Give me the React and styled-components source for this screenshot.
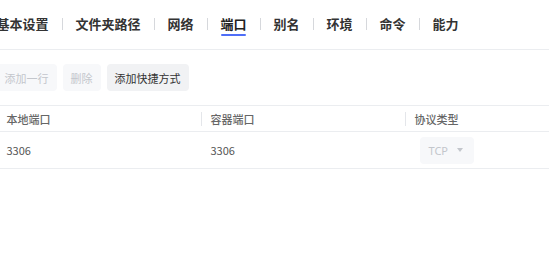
import React from "react";
import styled, { createGlobalStyle } from "styled-components";

const GlobalStyle = createGlobalStyle`
  html, body {
    margin: 0;
    padding: 0;
    background: #fff;
    overflow: hidden;
  }
  body {
    font-family: "Noto Sans CJK SC", "Noto Sans", sans-serif;
  }
`;

const Page = styled.div`
  margin-left: -3.5px;
  width: 620px;
`;

const TabBar = styled.div`
  display: flex;
  align-items: flex-start;
  height: 50px;
  padding-top: 17px;
  box-sizing: border-box;
  border-bottom: 1px solid #ebedf0;
`;

const Tab = styled.div`
  display: flex;
  flex-direction: column;
  align-items: center;
  font-size: 13px;
  line-height: 14px;
  font-weight: 600;
  color: ${({ active }) => (active ? "#222" : "#333")};
  cursor: pointer;

  &::after {
    content: "";
    display: ${({ active }) => (active ? "block" : "none")};
    width: 25px;
    height: 2px;
    margin-top: 3px;
    border-radius: 1px;
    background: #4f6ef7;
  }
`;

const TabSep = styled.span`
  width: 1px;
  height: 12px;
  margin: 1px 13px 0;
  background: #d6d8dc;
`;

const Toolbar = styled.div`
  display: flex;
  gap: 6px;
  margin-top: 14px;
`;

const Button = styled.button`
  height: 27px;
  padding: 0 8px;
  border: none;
  border-radius: 4px;
  font-family: inherit;
  font-size: 11px;
  background: ${({ disabled }) => (disabled ? "#f7f8fa" : "#f1f2f4")};
  color: ${({ disabled }) => (disabled ? "#c3c6cc" : "#333")};
  cursor: ${({ disabled }) => (disabled ? "not-allowed" : "pointer")};
`;

const Table = styled.table`
  margin-top: 14px;
  width: 612px;
  table-layout: fixed;
  border-collapse: collapse;
  border-top: 1px solid #ebedf0;
`;

const Th = styled.th`
  position: relative;
  height: 25px;
  padding: 0 10px;
  text-align: left;
  font-size: 11px;
  font-weight: 500;
  color: #666;
  border-bottom: 1px solid #ebedf0;

  &:not(:first-child)::before {
    content: "";
    position: absolute;
    left: 0;
    top: 6px;
    width: 1px;
    height: 14px;
    background: #e4e6ea;
  }
`;

const Td = styled.td`
  height: 36px;
  padding: 0 10px;
  font-size: 11px;
  color: #555;
  border-bottom: 1px solid #ebedf0;
`;

const Select = styled.div`
  display: inline-flex;
  align-items: center;
  gap: 9px;
  height: 27px;
  width: 54px;
  margin-left: 5px;
  box-sizing: border-box;
  padding: 0 9px;
  border-radius: 4px;
  background: #f7f8fa;
  color: #c3c6cc;
  font-size: 11px;
  font-family: "Noto Sans", sans-serif;
`;

const Caret = styled.span`
  width: 0;
  height: 0;
  border-left: 3px solid transparent;
  border-right: 3px solid transparent;
  border-top: 4px solid #c3c6cc;
`;

const tabs = ["基本设置", "文件夹路径", "网络", "端口", "别名", "环境", "命令", "能力"];

export default function App() {
  return (
    <>
      <GlobalStyle />
      <Page>
        <TabBar>
          {tabs.map((t, i) => (
            <React.Fragment key={t}>
              {i > 0 && <TabSep />}
              <Tab active={t === "端口"}>{t}</Tab>
            </React.Fragment>
          ))}
        </TabBar>
        <Toolbar>
          <Button disabled>添加一行</Button>
          <Button disabled>删除</Button>
          <Button>添加快捷方式</Button>
        </Toolbar>
        <Table>
          <thead>
            <tr>
              <Th>本地端口</Th>
              <Th>容器端口</Th>
              <Th>协议类型</Th>
            </tr>
          </thead>
          <tbody>
            <tr>
              <Td>3306</Td>
              <Td>3306</Td>
              <Td>
                <Select>
                  TCP
                  <Caret />
                </Select>
              </Td>
            </tr>
          </tbody>
        </Table>
      </Page>
    </>
  );
}
